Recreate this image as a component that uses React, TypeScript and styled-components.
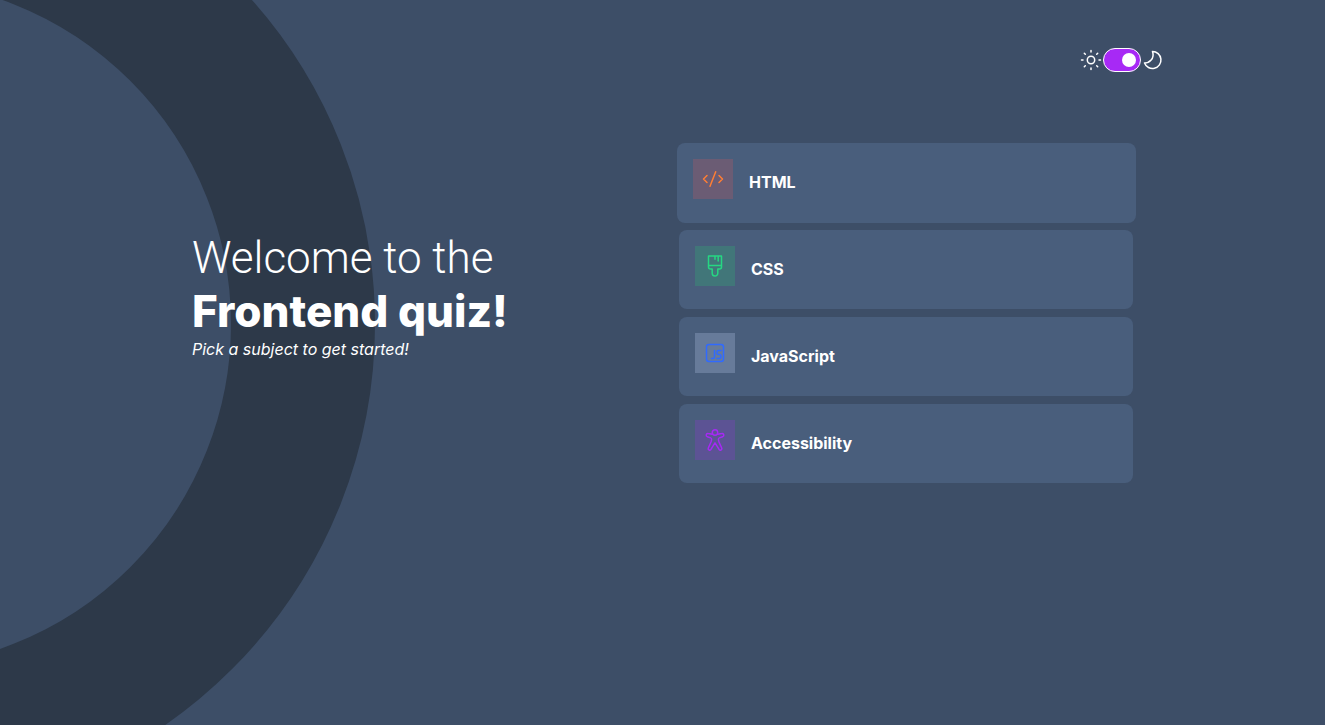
import React, { useState } from "react";
import styled, { createGlobalStyle } from "styled-components";

const GlobalStyle = createGlobalStyle`
  *, *::before, *::after { box-sizing: border-box; }
  body {
    margin: 0;
    background: #3d4e67;
    color: #ffffff;
    font-family: Inter, Roboto, "Liberation Sans", sans-serif;
    font-size: 16px;
  }
`;

const Page = styled.div`
  position: relative;
  min-height: 100vh;
  overflow: hidden;
`;

const Ring = styled.svg`
  position: absolute;
  top: -164px;
  left: -601px;
  width: 976px;
  height: 976px;
  pointer-events: none;
`;

const Header = styled.header`
  position: relative;
  display: flex;
  justify-content: flex-end;
  padding: 48px 161px 0 0;
`;

const ThemeLabel = styled.label`
  display: flex;
  align-items: center;
  cursor: pointer;
`;

const ThemeIcon = styled.svg`
  width: 22px;
  height: 22px;
  fill: none;
  stroke: #ffffff;
  stroke-width: 1.5;
  stroke-linecap: round;
  stroke-linejoin: round;
`;

const Switch = styled.input`
  appearance: none;
  display: flex;
  align-items: center;
  width: 38px;
  height: 24px;
  margin: 0 1px;
  padding: 0 4px;
  border: 1px solid #ffffff;
  border-radius: 12px;
  background: #a729f5;
  cursor: pointer;

  &::before {
    content: "";
    width: 14px;
    height: 14px;
    border-radius: 50%;
    background: #ffffff;
  }

  &:checked {
    justify-content: flex-end;
  }
`;

const Main = styled.main`
  position: relative;
  display: grid;
  grid-template-columns: 1fr 1fr;
  gap: 33px;
  padding: 71px 192px 48px;
`;

const Intro = styled.section`
  padding-top: 89px;
`;

const Title = styled.h1`
  margin: 0;
  font-family: Roboto, "Liberation Sans", sans-serif;
  font-size: 44px;
  line-height: 53px;
  font-weight: 300;
  white-space: nowrap;
`;

const Strong = styled.strong`
  display: block;
  font-family: Inter, "Liberation Sans", sans-serif;
  font-weight: 800;
`;

const Hint = styled.p`
  margin: 0;
  font-size: 16px;
  line-height: 22px;
  font-style: italic;
`;

const Subjects = styled.ul`
  display: flex;
  flex-direction: column;
  gap: 8px;
  margin: 0;
  padding: 0;
  list-style: none;
`;

const Subject = styled.li`
  display: grid;
  height: 79px;
`;

const SubjectButton = styled.button<{ $active: boolean }>`
  display: flex;
  align-items: center;
  gap: 16px;
  margin: ${(p) => (p.$active ? "0 -3px -1px -2px" : "0")};
  padding: 16px 16px 18px;
  border: 0;
  border-radius: 8px;
  background: #495e7c;
  color: #ffffff;
  font: inherit;
  font-weight: 700;
  line-height: 20px;
  text-align: left;
  cursor: pointer;
`;

const IconTile = styled.span<{ $tint: string }>`
  display: grid;
  place-items: center;
  align-self: flex-start;
  width: 40px;
  height: 40px;
  background: ${(p) => p.$tint};
`;

const Glyph = styled.svg<{ $color: string }>`
  width: 24px;
  height: 24px;
  fill: none;
  stroke: ${(p) => p.$color};
  stroke-width: 1.5;
  stroke-linecap: round;
  stroke-linejoin: round;
`;

const subjects = [
  {
    name: "HTML",
    color: "#ff7e35",
    tint: "#6b5c74",
    drawing: <path d="M6 8.500 2.500 12 6 15.500M18 8.500l3.500 3.500-3.500 3.500M14.700 4.800 9 19.200" />,
  },
  {
    name: "CSS",
    color: "#26d782",
    tint: "#417679",
    drawing: (
      <path d="M5.500 2h13v11a2 2 0 0 1-2 2h-1.700v4.200a2.800 2.800 0 0 1-5.600 0v-4.200H7.500a2 2 0 0 1-2-2zM5.500 11.500h13M12 2v3.200M15.200 2v5" />
    ),
  },
  {
    name: "JavaScript",
    color: "#306aff",
    tint: "#677b9a",
    drawing: (
      <>
        <rect x="3.500" y="3.500" width="17" height="17" rx="2.500" />
        <path d="M11.500 9.500v6.500a1.500 1.500 0 0 1-1.500 1.500H8.500M18 9.500h-2.500a1.500 1.500 0 0 0-1.500 1.500v1a1.500 1.500 0 0 0 1.500 1.500h1a1.500 1.500 0 0 1 1.500 1.500v1a1.500 1.500 0 0 1-1.500 1.500H14" />
      </>
    ),
  },
  {
    name: "Accessibility",
    color: "#a729f5",
    tint: "#5c5394",
    drawing: (
      <>
        <circle cx="12" cy="4.500" r="2.700" />
        <path d="M9.300 6.300 5.200 5.600a1.600 1.600 0 0 0-.8 3.100l3.200 1.200c.8.3 1.100.9 1 1.700L8 14l-2.700 6a1.500 1.500 0 0 0 2.800 1.200L12 14.800l3.900 6.400a1.500 1.500 0 0 0 2.800-1.200L16 14l-.6-2.400c-.1-.8.2-1.400 1-1.700l3.200-1.200a1.600 1.600 0 0 0-.8-3.100l-4.100.7" />
      </>
    ),
  },
];

export default function App() {
  const [dark, setDark] = useState(true);
  const [active, setActive] = useState("HTML");

  return (
    <Page>
      <GlobalStyle />
      <Ring viewBox="0 0 976 976" aria-hidden="true">
        <circle cx="488" cy="488" r="416" fill="none" stroke="#2d3949" strokeWidth="144" />
      </Ring>
      <Header>
        <ThemeLabel>
          <ThemeIcon viewBox="0 0 22 22" aria-hidden="true">
            <circle cx="11" cy="11" r="3.700" />
            <path d="M11 1.500v1.500M11 19v1.500M1.500 11H3M19 11h1.500M4.300 4.300l1 1M16.700 16.700l1 1M4.300 17.700l1-1M16.700 5.300l1-1" />
          </ThemeIcon>
          <Switch
            type="checkbox"
            role="switch"
            aria-label="Dark theme"
            checked={dark}
            onChange={(e) => setDark(e.target.checked)}
          />
          <ThemeIcon viewBox="0 0 22 22" aria-hidden="true">
            <path d="M10.500 2.500a8.500 8.500 0 1 1-8 11.500c4.500 0 10.500-4 8-11.500z" />
          </ThemeIcon>
        </ThemeLabel>
      </Header>
      <Main>
        <Intro>
          <Title>
            Welcome to the <Strong>Frontend quiz!</Strong>
          </Title>
          <Hint>Pick a subject to get started!</Hint>
        </Intro>
        <Subjects>
          {subjects.map((s) => (
            <Subject key={s.name}>
              <SubjectButton
                type="button"
                $active={active === s.name}
                onMouseEnter={() => setActive(s.name)}
              >
                <IconTile $tint={s.tint}>
                  <Glyph viewBox="0 0 24 24" $color={s.color} aria-hidden="true">
                    {s.drawing}
                  </Glyph>
                </IconTile>
                {s.name}
              </SubjectButton>
            </Subject>
          ))}
        </Subjects>
      </Main>
    </Page>
  );
}
